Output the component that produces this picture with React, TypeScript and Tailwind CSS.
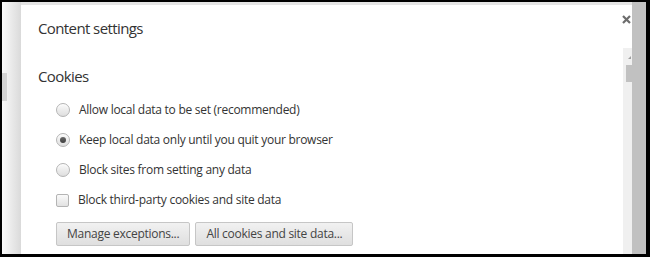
import React from "react";

const font = { fontFamily: '"Open Sans", "Noto Sans", sans-serif' };

function Radio({ checked }: { checked?: boolean }) {
  return (
    <span className="flex h-[14px] w-[14px] shrink-0 items-center justify-center rounded-full border border-[#b4b4b4] bg-gradient-to-b from-[#fafafa] to-[#dedede] shadow-[inset_0_1px_1px_rgba(255,255,255,0.8)]">
      {checked && <span className="h-[6px] w-[6px] rounded-full bg-gradient-to-b from-[#6a6a6a] to-[#3e3e3e]" />}
    </span>
  );
}

function Checkbox() {
  return (
    <span className="h-[13px] w-[13px] shrink-0 rounded-[2px] border border-[#b4b4b4] bg-gradient-to-b from-[#fafafa] to-[#e2e2e2]" />
  );
}

function Option({ label, checked }: { label: string; checked?: boolean }) {
  return (
    <label className="flex h-[30px] items-center gap-[9px] pl-[18px]">
      <Radio checked={checked} />
      <span className="text-[12px] tracking-[-0.27px] text-[#333]">{label}</span>
    </label>
  );
}

function Button({ children }: { children: React.ReactNode }) {
  return (
    <button className="h-[24px] rounded-[2px] border border-[#c6c6c6] bg-gradient-to-b from-[#f1f1f1] to-[#dfdfdf] px-[10px] text-[12px] tracking-[-0.27px] text-[#444]">
      {children}
    </button>
  );
}

export default function App() {
  return (
    <div style={font} className="flex h-[257px] w-[650px] overflow-hidden border-t-2 border-l-2 border-r-4 border-b-[3px] border-black bg-white">
      {/* page behind the overlay */}
      <div className="flex w-[19px] shrink-0 flex-col bg-gradient-to-r from-[#fafafa] to-[#dadada]">
        <div className="mt-[71px] h-[28px] w-[5px] bg-[#d4d4d4]" />
      </div>

      <div className="flex w-[611px] shrink-0 flex-col">
        <div className="h-[3px] bg-[#e4e4e4]" />

        {/* dialog */}
        <div className="relative flex flex-1 flex-col bg-white">
          <div className="h-[43px] pl-[17px] pt-[13px]">
            <h1 className="text-[15px] leading-[20px] tracking-[-0.6px] text-[#333]">Content settings</h1>
          </div>
          <button className="absolute right-[1px] top-[10px] h-[9px] w-[9px]">
            <svg viewBox="0 0 9 9" className="h-[9px] w-[9px]">
              <path d="M1 1L8 8M8 1L1 8" stroke="#6d6d6d" strokeWidth="2.2" />
            </svg>
          </button>

          <div className="flex flex-1">
            <div className="flex-1 pl-[17px] pt-[18px]">
              <h2 className="text-[15px] leading-[20px] tracking-[-0.6px] text-[#333]">Cookies</h2>
              <div className="mt-[9px]">
                <Option label="Allow local data to be set (recommended)" />
                <Option label="Keep local data only until you quit your browser" checked />
                <Option label="Block sites from setting any data" />
                <label className="flex h-[30px] items-center gap-[9px] pl-[18px]">
                  <Checkbox />
                  <span className="text-[12px] tracking-[-0.27px] text-[#333]">Block third-party cookies and site data</span>
                </label>
              </div>
              <div className="mt-[7px] flex gap-[5px] pl-[18px]">
                <Button>Manage exceptions...</Button>
                <Button>All cookies and site data...</Button>
              </div>
            </div>

            {/* inner scrollbar */}
            <div className="flex w-[9px] shrink-0 flex-col items-end bg-[#f0f0f0]">
              <div className="mr-[1px] mt-[8px] h-0 w-0 border-b-[3px] border-l-[3px] border-b-[#a0a0a0] border-l-transparent" />
              <div className="mt-[6px] h-[17px] w-[6px] bg-[#c1c1c1]" />
            </div>
          </div>
        </div>
      </div>

      <div className="w-[14px] shrink-0 bg-[#c1c1c1]" />
    </div>
  );
}
